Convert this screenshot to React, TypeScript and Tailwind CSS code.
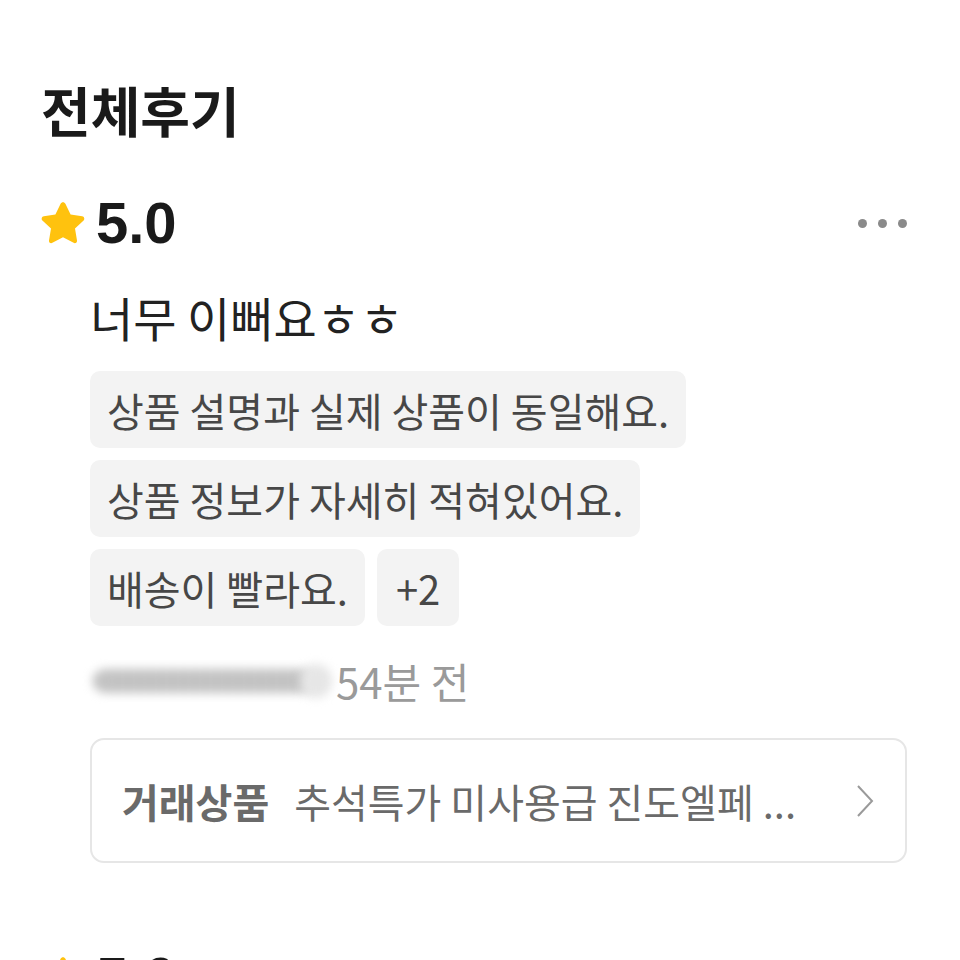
import React from "react";

const font = { fontFamily: '"Noto Sans CJK KR", "Noto Sans", sans-serif' };

function Star({ className }: { className?: string }) {
  return (
    <svg viewBox="0 0 24 24" className={className}>
      <path
        d="M12 1.6c.5 0 1 .3 1.2.8l2.6 5.4 5.8.8c1 .1 1.4 1.4.7 2.1l-4.3 4.1 1 5.9c.2 1-.9 1.7-1.7 1.2L12 19.1l-5.3 2.8c-.9.5-1.9-.2-1.7-1.2l1-5.9-4.3-4.1c-.7-.7-.3-2 .7-2.1l5.8-.8 2.6-5.4c.2-.5.7-.8 1.2-.8z"
        fill="#FFC20E"
      />
    </svg>
  );
}

function Chip({ children, wide }: { children: React.ReactNode; wide?: boolean }) {
  return (
    <div
      className={
        wide
          ? "rounded-[10px] bg-[#f3f3f3] px-[19px] h-[77px] flex items-center text-[40px] text-[#474747] leading-none"
          : "rounded-[10px] bg-[#f3f3f3] px-[17px] h-[77px] flex items-center text-[40px] text-[#474747] leading-none"
      }
    >
      {children}
    </div>
  );
}

function Rating() {
  return (
    <div className="flex items-center">
      <Star className="w-[48px] h-[48px] -ml-[2px]" />
      <span
        className="ml-[9px] text-[58px] font-bold text-[#1a1a1a] leading-none"
        style={{ fontFamily: '"Liberation Sans", sans-serif' }}
      >
        5.0
      </span>
    </div>
  );
}

export default function App() {
  return (
    <div className="w-[960px] h-[960px] overflow-hidden bg-white" style={font}>
      <div className="pl-[41px] pr-[53px] pt-[80px]">
        <h1 className="text-[54px] font-bold text-[#1a1a1a] leading-[60px]">전체후기</h1>
        <div className="mt-[58px] flex items-center justify-between h-[50px]">
          <Rating />
          <div className="flex items-center gap-[11px]">
            <span className="w-[9px] h-[9px] rounded-full bg-[#8a8a8a]" />
            <span className="w-[9px] h-[9px] rounded-full bg-[#8a8a8a]" />
            <span className="w-[9px] h-[9px] rounded-full bg-[#8a8a8a]" />
          </div>
        </div>
        <div className="pl-[49px]">
          <p className="mt-[43px] text-[47px] text-[#222] leading-[52px]">너무 이뻐요ㅎㅎ</p>
          <div className="mt-[28px] flex flex-col gap-[12px] items-start">
            <Chip>상품 설명과 실제 상품이 동일해요.</Chip>
            <Chip>상품 정보가 자세히 적혀있어요.</Chip>
            <div className="flex gap-[12px]">
              <Chip>배송이 빨라요.</Chip>
              <Chip wide>+2</Chip>
            </div>
          </div>
          <div className="mt-[29px] flex items-center h-[52px]">
            <div className="relative w-[250px] h-[50px] -ml-[5px]">
              <div className="absolute left-[8px] right-[22px] top-[13px] bottom-[13px] rounded-full bg-[repeating-linear-gradient(90deg,#b8b8b8_0px,#c4c4c4_7px,#d6d6d6_11px)] blur-[5px]" />
              <div className="absolute left-[215px] w-[32px] top-[8px] bottom-[8px] rounded-full bg-[#e6e6e6] blur-[5px]" />
            </div>
            <span className="ml-[1px] text-[42px] text-[#9a9a9a] leading-none">54분 전</span>
          </div>
          <div className="mt-[31px] h-[125px] rounded-[14px] border-2 border-[#e6e6e6] flex items-center pl-[30px] pr-[30px]">
            <span className="text-[40px] font-bold text-[#6a6a6a] leading-none">거래상품</span>
            <span className="ml-[25px] text-[40px] text-[#6a6a6a] leading-none flex-1">추석특가 미사용급 진도엘페 ...</span>
            <svg viewBox="0 0 20 34" className="w-[20px] h-[34px]">
              <path d="M3 2 L17 17 L3 32" fill="none" stroke="#9a9a9a" strokeWidth="2" />
            </svg>
          </div>
        </div>
        <div className="mt-[90px] h-[50px] flex items-center">
          <Rating />
        </div>
      </div>
    </div>
  );
}
